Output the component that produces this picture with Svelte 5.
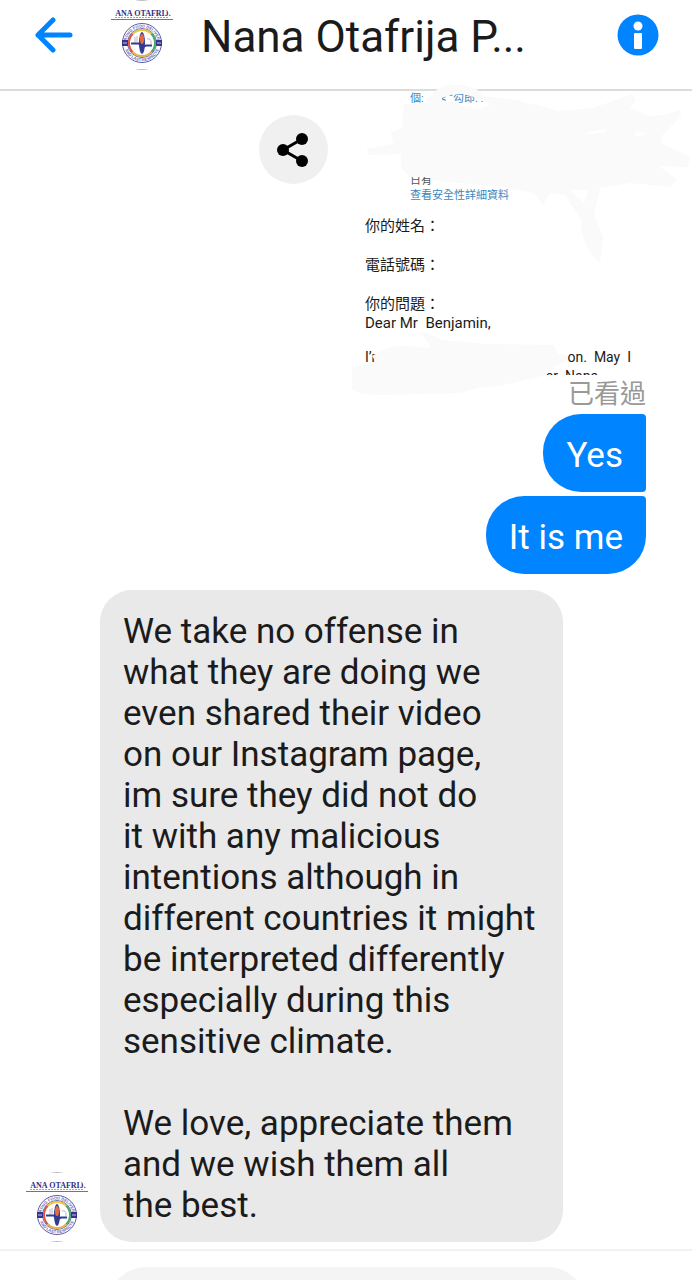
<script>
	let contact = 'Nana Otafrija P...';

	let sent = $state(['Yes', 'It is me']);

	let reply = [
		'We take no offense in',
		'what they are doing we',
		'even shared their video',
		'on our Instagram page,',
		'im sure they did not do',
		'it with any malicious',
		'intentions although in',
		'different countries it might',
		'be interpreted differently',
		'especially during this',
		'sensitive climate.',
		'',
		'We love, appreciate them',
		'and we wish them all',
		'the best.'
	].join('\n');
</script>

{#snippet avatar(id)}
	<svg class="avatar" viewBox="0 0 70 70" aria-hidden="true">
		<defs>
			<clipPath id="{id}-clip"><circle cx="35" cy="35" r="35" /></clipPath>
			<path id="{id}-top" d="M19.5 43a15.5 15.5 0 0 1 31 0" />
			<path id="{id}-bottom" d="M16.8 43a18.2 18.2 0 0 0 36.4 0" />
		</defs>
		<g clip-path="url(#{id}-clip)">
			<path d="M29 .5h12M29 69.5h12" stroke="#bbb" />
			<text x="36" y="16" text-anchor="middle" class="brand">ANA OTAFRIJ.</text>
			<path d="M4 19.5h62" stroke="#6f6fa8" />
			<path d="M8 17.5h54" stroke="#a0a0c8" stroke-dasharray="2 1" />
			<circle cx="35" cy="43" r="19.5" fill="#fff" stroke="#5c5cab" />
			<text class="ring"><textPath href="#{id}-top" startOffset="50%">STRONG FOOD DELIVERED</textPath></text>
			<text class="ring"><textPath href="#{id}-bottom" startOffset="50%">AND LAST RESPECTS</textPath></text>
			<circle cx="35" cy="43" r="14.5" fill="none" stroke="#6a6ab4" />
			<path d="M25.8 52.2a13 13 0 0 1 0-18.4" fill="none" stroke="#e0553c" stroke-width="2" />
			<path d="M25.8 33.8a13 13 0 0 1 18.4 0" fill="none" stroke="#edc640" stroke-width="2" />
			<path d="M44.2 33.8a13 13 0 0 1 0 18.4" fill="none" stroke="#45a968" stroke-width="2" />
			<path d="M44.2 52.2a13 13 0 0 1-18.4 0" fill="none" stroke="#e8b244" stroke-width="2" />
			<path d="M15 40h6v6h-6zM49 40h6v6h-6z" fill="#353590" />
			<path d="M16 43h4M50 43h4" stroke="#c3c3e6" />
			<path d="M28 37v6M30 36v6M40 39q4-1 4 3v2" fill="none" stroke="#bbb" />
			<ellipse cx="35" cy="43" rx="3" ry="11" fill="#303b91" />
			<ellipse cx="35" cy="39" rx="2" ry="5" fill="#e66c3d" />
			<path d="M24 43.5h8l2 3h3l2-1h6" fill="none" stroke="#303b91" stroke-width="2" />
		</g>
	</svg>
{/snippet}

<div class="app">
	<header>
		<button class="back" aria-label="Back">
			<svg width="38" height="36" viewBox="0 0 38 36">
				<path
					d="M35 18H3M18 3 3 18l15 15"
					fill="none"
					stroke="#0084ff"
					stroke-width="5"
					stroke-linecap="round"
					stroke-linejoin="round"
				/>
			</svg>
		</button>
		{@render avatar('head')}
		<h1>{contact}</h1>
		<button class="info" aria-label="Info">
			<svg width="42" height="42" viewBox="0 0 42 42">
				<circle cx="21" cy="21" r="20.5" fill="#0084ff" />
				<circle cx="21" cy="12" r="4.5" fill="#fff" />
				<rect x="17" y="19" width="8" height="16" rx="1" fill="#fff" />
			</svg>
		</button>
	</header>

	<main>
		<div class="shared">
			<button class="share" aria-label="Share">
				<svg width="34" height="36" viewBox="0 0 34 36">
					<path d="M25 7 6 18l19 11" fill="none" stroke="#000" stroke-width="3" />
					<circle cx="6" cy="18" r="6" />
					<circle cx="25" cy="7" r="6" />
					<circle cx="25" cy="29" r="6" />
				</svg>
			</button>

			<article class="card">
				<div class="mail">
					<div class="meta">
						<p class="address"><span>個:</span><span>&lt; “勾郎. .</span></p>
						<p class="date">日有</p>
						<a href="#details">查看安全性詳細資料</a>
					</div>
					<p>你的姓名：</p>
					<p>電話號碼：</p>
					<div class="question">
						<p>你的問題：</p>
						<p class="latin">Dear Mr  Benjamin,</p>
					</div>
					<div class="body">
						<p class="latin split"><span>I’m</span><span>on.  May  I</span></p>
						<p class="latin tail">or  Nana</p>
					</div>
				</div>
				<!-- marker strokes over the private parts of the mail -->
				<svg class="marker" width="340" height="320" viewBox="352 85 340 320" aria-hidden="true">
					<path
						fill="#fafafa"
						d="M429 97Q440 84 455 84 476 85 484 96L516 100 500 105 487 102 474 97 462 94 450 95 442 98 442 103H429Z"
					/>
					<path
						fill="#fafafa"
						d="M404 104 442 102 456 102 463 106 478 109 488 106 492 100 516 100 560 111 593 108 632 94 636 99 630 108 650 116 663 115 680 110 681 116 662 136 661 143 690 157 688 167 660 166 677 180 671 187 630 183 600 188 594 214 603 237 600 263Q590 256 586 244 580 232 582 222L565 195 550 193 543 205 534 193 500 186 480 185 450 182 432 180 431 177 410 177 401 167 401 154 368 155 367 149 393 144 391 132 402 128Z"
					/>
					<path fill="#fff" d="M583 133 605 129 608 131 594 134ZM635 131 646 133 641 136 635 136ZM569 190 588 190 584 203Z" />
					<path
						fill="#fafafa"
						d="M372 356Q395 342 412 347L430 348Q428 338 418 332 436 334 442 340L488 344 554 345 558 354 567 355 567 362 556 366 546 375 500 386 478 388 460 393 380 395Q351 394 352 388L352 367 376 362Z"
					/>
				</svg>
			</article>
		</div>

		<p class="seen">已看過</p>

		<div class="outgoing">
			{#each sent as text}
				<p class="bubble mine">{text}</p>
			{/each}
		</div>

		<div class="incoming">
			{@render avatar('thread')}
			<p class="bubble theirs">{reply}</p>
		</div>
	</main>

	<footer>
		<input type="text" aria-label="Message" />
	</footer>
</div>

<style>
	:global(body) {
		background: #fff;
	}

	.app {
		display: flex;
		flex-direction: column;
		height: 100vh;
		overflow: hidden;
		background: #fff;
		color: #1b1b1b;
		font-family: Roboto, 'Noto Sans CJK TC', sans-serif;
	}

	p,
	h1 {
		margin: 0;
		font-weight: 400;
	}

	button {
		display: grid;
		place-items: center;
		padding: 0;
		border: 0;
		background: none;
		cursor: pointer;
	}

	svg {
		display: block;
		flex: none;
	}

	header {
		display: flex;
		flex: none;
		align-items: center;
		box-sizing: border-box;
		height: 91px;
		padding: 0 33px 19px 35px;
		border-bottom: 2px solid #dcdcdc;
	}

	h1 {
		flex: 1;
		padding: 4px 0 0 24px;
		font-size: 44px;
		line-height: 48px;
		white-space: nowrap;
	}

	.avatar {
		width: 70px;
		height: 70px;
	}

	header .avatar {
		margin-left: 34px;
	}

	.brand {
		fill: #2f2f86;
		font: bold 8px 'Liberation Serif', serif;
	}

	.ring {
		fill: #6a6ab4;
		font: bold 4px 'Liberation Sans', sans-serif;
		text-anchor: middle;
	}

	main {
		flex: 1;
	}

	.shared {
		display: flex;
		justify-content: flex-end;
		padding-right: 46px;
		gap: 24px;
	}

	.share {
		width: 69px;
		height: 69px;
		margin-top: 24px;
		border-radius: 50%;
		background: #f0f0f0;
	}

	.card {
		position: relative;
		width: 294px;
		height: 284px;
	}

	.mail {
		display: flex;
		flex-direction: column;
		gap: 20px;
		box-sizing: border-box;
		height: 100%;
		padding: 0 15px 0 13px;
		overflow: hidden;
		font-size: 15px;
		line-height: 19px;
	}

	.meta {
		margin-bottom: -6px;
		padding-left: 45px;
		font-size: 11px;
		line-height: 15px;
	}

	.address {
		display: flex;
		gap: 17px;
		margin-bottom: 67px;
		color: #3d86bd;
	}

	.date {
		color: #555;
	}

	.meta a {
		display: block;
		color: #3d86bd;
		text-decoration: none;
	}

	.latin {
		white-space: pre;
	}

	.body {
		margin-top: -5px;
		font-size: 14px;
	}

	.split {
		display: flex;
		justify-content: space-between;
	}

	.tail {
		padding-right: 33px;
		text-align: right;
	}

	.marker {
		position: absolute;
		top: -6px;
		left: 0;
	}

	.seen {
		padding-right: 46px;
		color: #999;
		font-size: 26px;
		line-height: 39px;
		text-align: right;
	}

	.outgoing {
		display: flex;
		flex-direction: column;
		align-items: flex-end;
		gap: 4px;
		padding-right: 46px;
	}

	.bubble {
		padding: 21px 23px 16px;
		font-size: 35px;
		line-height: 41px;
	}

	.mine {
		border-radius: 38px 4px 4px 38px;
		background: #0084ff;
		color: #fff;
	}

	.mine:last-child {
		border-bottom-right-radius: 38px;
	}

	.incoming {
		display: flex;
		align-items: flex-end;
		gap: 8px;
		padding: 16px 129px 0 22px;
	}

	.theirs {
		flex: 1;
		border-radius: 32px;
		background: #e9e9e9;
		white-space: pre-line;
	}

	footer {
		flex: none;
		box-sizing: border-box;
		height: 31px;
		padding: 16px 106px 0 108px;
		border-top: 2px solid #f2f2f2;
	}

	input {
		box-sizing: border-box;
		width: 100%;
		height: 76px;
		padding: 0 24px;
		border: 0;
		border-radius: 38px;
		background: #f4f4f4;
		font: inherit;
		font-size: 35px;
	}
</style>
